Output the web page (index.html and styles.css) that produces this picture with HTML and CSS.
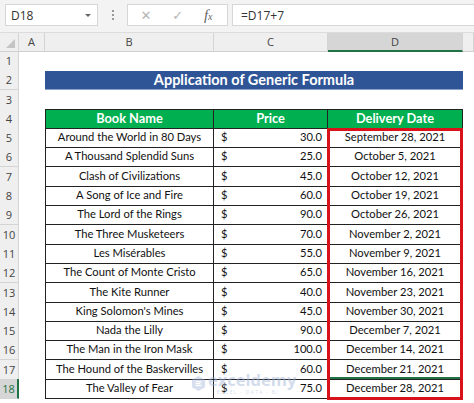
FILE: index.html
```html
<html>

<head>
    <title>Application of Generic Formula</title>
    <link rel="stylesheet" href="styles.css">
</head>

<body>
    <div class="toolbar">
        <div class="nameBox">D18<span class="caret"></span></div>
        <div class="grip"><i></i><i></i><i></i></div>
        <div class="fxBox">
            <span class="tool">&#x2715;</span>
            <span class="tool">&#x2713;</span>
            <span class="tool fx">f<small>x</small></span>
        </div>
        <div class="formula">=D17+7</div>
    </div>

    <div class="sheet">
        <div class="row colHeads">
            <div class="corner"></div>
            <div class="colHead">A</div>
            <div class="colHead">B</div>
            <div class="colHead">C</div>
            <div class="colHead sel">D</div>
            <div class="colHead"></div>
        </div>

        <div class="row"><div class="rowHead">1</div></div>
        <div class="row">
            <div class="rowHead">2</div><div></div>
            <div class="title">Application of Generic Formula</div>
        </div>
        <div class="row"><div class="rowHead">3</div></div>
        <div class="row">
            <div class="rowHead">4</div><div></div>
            <div class="cell head first">Book Name</div>
            <div class="cell head">Price</div>
            <div class="cell head">Delivery Date</div>
        </div>

        <div class="row"><div class="rowHead">5</div><div></div><div class="cell first">Around the World in 80 Days</div><div class="cell price"><span>$</span><span>30.0</span></div><div class="cell">September 28, 2021</div></div>
        <div class="row"><div class="rowHead">6</div><div></div><div class="cell first">A Thousand Splendid Suns</div><div class="cell price"><span>$</span><span>25.0</span></div><div class="cell">October 5, 2021</div></div>
        <div class="row"><div class="rowHead">7</div><div></div><div class="cell first">Clash of Civilizations</div><div class="cell price"><span>$</span><span>45.0</span></div><div class="cell">October 12, 2021</div></div>
        <div class="row"><div class="rowHead">8</div><div></div><div class="cell first">A Song of Ice and Fire</div><div class="cell price"><span>$</span><span>60.0</span></div><div class="cell">October 19, 2021</div></div>
        <div class="row"><div class="rowHead">9</div><div></div><div class="cell first">The Lord of the Rings</div><div class="cell price"><span>$</span><span>90.0</span></div><div class="cell">October 26, 2021</div></div>
        <div class="row"><div class="rowHead">10</div><div></div><div class="cell first">The Three Musketeers</div><div class="cell price"><span>$</span><span>70.0</span></div><div class="cell">November 2, 2021</div></div>
        <div class="row"><div class="rowHead">11</div><div></div><div class="cell first">Les Misérables</div><div class="cell price"><span>$</span><span>55.0</span></div><div class="cell">November 9, 2021</div></div>
        <div class="row"><div class="rowHead">12</div><div></div><div class="cell first">The Count of Monte Cristo</div><div class="cell price"><span>$</span><span>65.0</span></div><div class="cell">November 16, 2021</div></div>
        <div class="row"><div class="rowHead">13</div><div></div><div class="cell first">The Kite Runner</div><div class="cell price"><span>$</span><span>40.0</span></div><div class="cell">November 23, 2021</div></div>
        <div class="row"><div class="rowHead">14</div><div></div><div class="cell first">King Solomon's Mines</div><div class="cell price"><span>$</span><span>45.0</span></div><div class="cell">November 30, 2021</div></div>
        <div class="row"><div class="rowHead">15</div><div></div><div class="cell first">Nada the Lilly</div><div class="cell price"><span>$</span><span>90.0</span></div><div class="cell">December 7, 2021</div></div>
        <div class="row"><div class="rowHead">16</div><div></div><div class="cell first">The Man in the Iron Mask</div><div class="cell price"><span>$</span><span>100.0</span></div><div class="cell">December 14, 2021</div></div>
        <div class="row"><div class="rowHead">17</div><div></div><div class="cell first">The Hound of the Baskervilles</div><div class="cell price"><span>$</span><span>60.0</span></div><div class="cell">December 21, 2021</div></div>
        <div class="row"><div class="rowHead sel">18</div><div></div><div class="cell first">The Valley of Fear</div><div class="cell price"><span>$</span><span>75.0</span></div><div class="cell active">December 28, 2021</div></div>

        <!-- red highlight over D5:D18 -->
        <div class="redBox"></div>

        <!-- faint site watermark -->
        <div class="watermark">
            <svg width="15" height="17" viewBox="0 0 16 18">
                <path d="M8 1 L15 5 L15 13 L8 17 L1 13 L1 5 Z" fill="#a9bbdc" />
                <path d="M5 7 L11 7 M5 9 L10 9 M5 11 L11 11" stroke="#fff" stroke-width="1.2" />
            </svg>
            <div>
                <div class="wmName">exceldemy</div>
                <div class="wmTag">EXCEL - DATA - BI</div>
            </div>
        </div>
    </div>
</body>

</html>
```

FILE: styles.css
```css
body {
    margin: 0;
    width: 474px;
    height: 403px;
    overflow: hidden;
    background-color: white;
    font-family: Lato, "Noto Sans", sans-serif;
}

.toolbar {
    height: 33px;
    box-sizing: border-box;
    display: flex;
    align-items: center;
    padding: 0 0 2px 5px;
    background-color: #f3f3f3;
    border-bottom: 1px solid #dcdcdc;
}

.nameBox {
    width: 93px;
    height: 22px;
    box-sizing: border-box;
    display: flex;
    align-items: center;
    justify-content: space-between;
    padding: 0 6px 0 5px;
    background-color: white;
    border: 1px solid #d6d6d6;
    font-family: "Open Sans", sans-serif;
    font-size: 12px;
    color: #333;
}

.caret {
    width: 0;
    height: 0;
    border-left: 3px solid transparent;
    border-right: 3px solid transparent;
    border-top: 3px solid #666;
}

.grip {
    width: 29px;
    display: flex;
    flex-direction: column;
    align-items: center;
    gap: 2px;
}

.grip i {
    width: 2px;
    height: 2px;
    background-color: #9a9a9a;
}

.fxBox {
    width: 101px;
    height: 22px;
    box-sizing: border-box;
    display: flex;
    align-items: center;
    justify-content: space-around;
    padding: 0 4px 0 2px;
    background-color: white;
    border: 1px solid #d6d6d6;
}

.tool {
    font-family: "DejaVu Sans", sans-serif;
    font-size: 13px;
    color: #b6b6b6;
}

.tool.fx {
    font-family: "Liberation Serif", serif;
    font-style: italic;
    font-size: 15px;
    color: #666;
}

.tool.fx small {
    font-size: 10px;
}

.formula {
    flex: 1;
    height: 22px;
    box-sizing: border-box;
    margin-left: 4px;
    padding: 2px 0 0 8px;
    background-color: white;
    border: 1px solid #d6d6d6;
    border-right: none;
    font-family: "Open Sans", sans-serif;
    font-size: 12px;
    color: #333;
}

.sheet {
    position: relative;
}

.row {
    display: grid;
    grid-template-columns: 19px 26px 169px 114px 135px 1fr;
    height: 19.3px;
}

.colHeads {
    height: 18px;
    background-color: #efefef;
}

.corner {
    position: relative;
    border-right: 1px solid #d4d4d4;
    border-bottom: 1px solid #cfcfcf;
}

.corner::after {
    content: "";
    position: absolute;
    right: 3px;
    bottom: 3px;
    width: 0;
    height: 0;
    border-left: 9px solid transparent;
    border-bottom: 9px solid #c4c4c4;
}

.colHead {
    box-sizing: border-box;
    border-right: 1px solid #d4d4d4;
    border-bottom: 1px solid #cfcfcf;
    text-align: center;
    font-family: "Open Sans", sans-serif;
    font-size: 11px;
    line-height: 17px;
    color: #444;
}

.colHead.sel {
    background-color: #d6d6d6;
    border-bottom: 2px solid #217346;
}

.rowHead {
    box-sizing: border-box;
    background-color: #efefef;
    border-right: 1px solid #d4d4d4;
    border-bottom: 1px solid #d4d4d4;
    text-align: center;
    font-family: "Open Sans", sans-serif;
    font-size: 11px;
    line-height: 19px;
    color: #444;
}

.rowHead.sel {
    background-color: #d6d6d6;
    border-right: 2px solid #217346;
    color: #217346;
}

.title {
    grid-column: span 3;
    height: 18px;
    margin-top: 0.5px;
    background-color: #2f5597;
    border-bottom: 1px solid #8aa2cc;
    color: white;
    font-weight: bold;
    font-size: 14.5px;
    line-height: 18px;
    text-align: center;
}

.cell {
    box-sizing: border-box;
    border-right: 1px solid #222;
    border-bottom: 1px solid #222;
    text-align: center;
    font-size: 11.2px;
    line-height: 18.5px;
    color: #111;
    white-space: nowrap;
}

.cell.first {
    border-left: 1px solid #222;
}

.cell.head {
    border-top: 1px solid #222;
    background-color: #00b050;
    color: white;
    font-weight: bold;
    font-size: 12.8px;
    line-height: 17px;
}

.cell.price {
    display: flex;
    justify-content: space-between;
    padding: 0 5px 0 7px;
}

.cell.active {
    position: relative;
}

.cell.active::before {
    content: "";
    position: absolute;
    left: -1px;
    right: -1px;
    top: -2px;
    height: 2px;
    background-color: #217346;
}

.redBox {
    position: absolute;
    left: 327px;
    top: 95px;
    width: 136px;
    height: 272px;
    box-sizing: border-box;
    border: 3px solid #d8121b;
}

.watermark {
    position: absolute;
    left: 191px;
    top: 339px;
    display: flex;
    align-items: center;
    gap: 2px;
    opacity: 0.45;
}

.wmName {
    font-family: "Open Sans", sans-serif;
    font-weight: bold;
    font-size: 16.5px;
    line-height: 15px;
    color: #9fb3d6;
}

.wmTag {
    margin-top: 2px;
    padding-left: 9px;
    font-family: "Open Sans", sans-serif;
    font-size: 5px;
    letter-spacing: 1.3px;
    color: #9fb3d6;
}
```
